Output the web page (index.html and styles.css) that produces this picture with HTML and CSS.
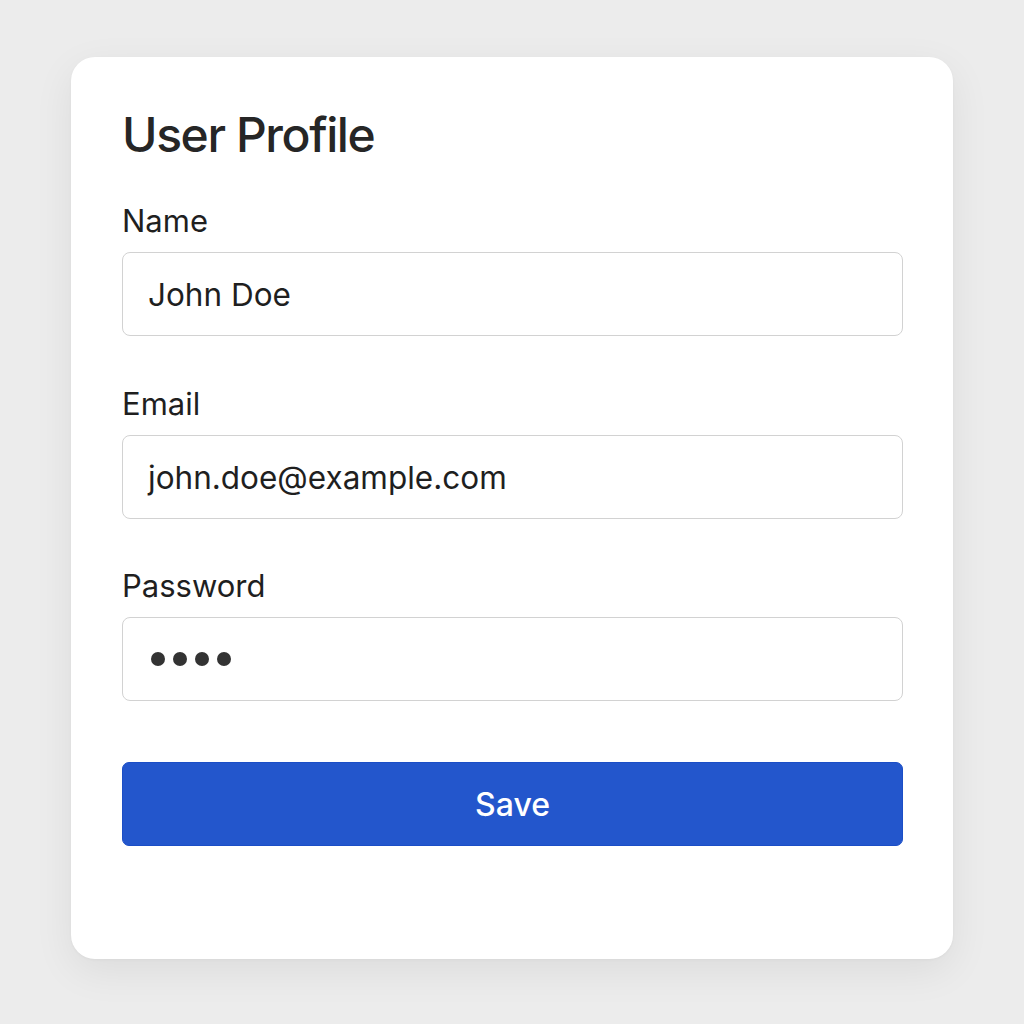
FILE: index.html
```html
<!DOCTYPE html>
<html lang="en">
<head>
<meta charset="utf-8">
<title>User Profile</title>
<link rel="stylesheet" href="styles.css">
</head>
<body>
<main class="page">
  <section class="card">
    <h1 class="title">User Profile</h1>
    <form class="form">
      <div class="group">
        <label class="label">Name</label>
        <div class="field">John Doe</div>
      </div>
      <div class="group">
        <label class="label">Email</label>
        <div class="field">john.doe@example.com</div>
      </div>
      <div class="group">
        <label class="label">Password</label>
        <div class="field field-pw" aria-label="password">
          <span class="dot"></span><span class="dot"></span><span class="dot"></span><span class="dot"></span>
        </div>
      </div>
      <button type="button" class="btn">Save</button>
    </form>
  </section>
</main>
</body>
</html>
```

FILE: styles.css
```css
* { box-sizing: border-box; }
html, body { margin: 0; padding: 0; }
body {
  background: #ececec;
  font-family: Inter, "Noto Sans", "Liberation Sans", sans-serif;
  color: #222;
  width: 1024px;
  height: 1024px;
  overflow: hidden;
}
.page {
  padding: 57px 0 0 71px;
}
.card {
  width: 882px;
  height: 902px;
  background: #fff;
  border-radius: 24px;
  box-shadow: 0 12px 40px rgba(0, 0, 0, 0.07), 0 1px 3px rgba(0, 0, 0, 0.04);
  padding: 49px 50px 0 51px;
}
.title {
  margin: 0;
  font-size: 48px;
  line-height: 58px;
  font-weight: 550;
  letter-spacing: -1.4px;
  color: #262626;
}
.form {
  display: flex;
  flex-direction: column;
  margin-top: 38px;
}
.group {
  display: flex;
  flex-direction: column;
  gap: 12px;
  margin-bottom: 49px;
}
.group:nth-child(3) {
  margin-bottom: 48px;
}
.label {
  font-size: 31px;
  line-height: 38px;
  font-weight: 400;
  color: #1f1f1f;
}
.group:nth-child(3) .label {
  margin-top: -1px;
}
.field {
  height: 84px;
  border: 1px solid #d2d2d2;
  border-radius: 8px;
  padding: 0 25px;
  display: flex;
  align-items: center;
  font-size: 31.5px;
  color: #1f1f1f;
}
.field-pw {
  gap: 8px;
  padding-left: 28px;
}
.dot {
  width: 14px;
  height: 14px;
  border-radius: 50%;
  background: #333;
}
.btn {
  margin-top: 13px;
  height: 84px;
  border: 1px solid #1b4ec6;
  border-radius: 7px;
  background: #2356cc;
  color: #fff;
  font-family: inherit;
  font-size: 32px;
  font-weight: 500;
  cursor: pointer;
}
```
